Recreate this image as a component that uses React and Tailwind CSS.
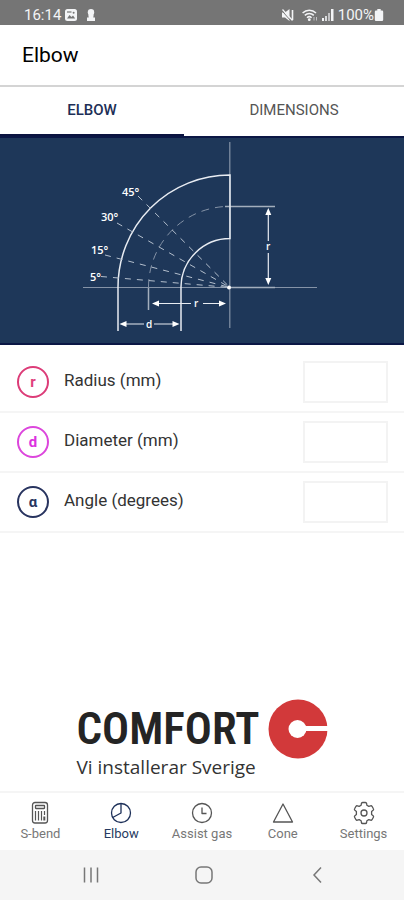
import { useState } from "react";
import clsx from "clsx";

const fields = [
  { id: "radius", symbol: "r", label: "Radius (mm)", color: "border-[#dc3c78] text-[#e0407c]" },
  { id: "diameter", symbol: "d", label: "Diameter (mm)", color: "border-[#dc46dc] text-[#dc32e0]" },
  { id: "angle", symbol: "α", label: "Angle (degrees)", color: "border-[#28345f] text-[#28345f]" },
];

const StatusBar = () => (
  <div className="flex items-end justify-between bg-[#757575] px-5 pt-[5px] text-[15px] leading-5 text-gray-100">
    <div className="flex items-center gap-1 pl-1">
      <span>16:14</span>
      <svg className="h-3 w-3" viewBox="0 0 12 12" aria-hidden="true">
        <rect width="12" height="12" rx="2.5" fill="#f3f4f6" />
        <path d="M2 9.5 4.500 6l2 2L8 6.600l2.200 2.900z" fill="#757575" />
        <path d="M2 3h4.500" stroke="#757575" strokeWidth="1.2" />
        <circle cx="8.600" cy="3.700" r="1" fill="#757575" />
      </svg>
      <svg className="ml-1 h-3 w-3" viewBox="0 0 12 12" fill="#f3f4f6" aria-hidden="true">
        <circle cx="6" cy="3.200" r="3.200" />
        <path d="M3.300 5.500h5.400L8.300 8.500h1.700V12H2V8.500h1.700z" />
      </svg>
    </div>
    <div className="flex items-center gap-1">
      <svg className="h-3 w-3" viewBox="0 0 12 12" fill="#f3f4f6" aria-hidden="true">
        <path d="M0 3.500h3L7.500 0v12L3 8.500H0z" />
        <path d="M10.500 1v10" stroke="#f3f4f6" strokeWidth="1.600" />
        <path d="M0 1.800l9 10.200" stroke="#757575" strokeWidth="1" />
        <path d="M.5 .5l10 11" stroke="#f3f4f6" strokeWidth="1.200" />
      </svg>
      <svg className="ml-1 h-3 w-4" viewBox="0 0 16 12" fill="none" stroke="#f3f4f6" strokeWidth="1.500" aria-hidden="true">
        <path d="M.6 4a9.500 9.500 0 0 1 13.400 0M2.800 6.400a6.500 6.500 0 0 1 9 0M5 8.700a3.400 3.400 0 0 1 4.600 0" />
        <circle cx="7.300" cy="10.600" r=".7" fill="#f3f4f6" />
        <path d="M12 8v3.500M14.500 8v3.500" strokeWidth="1" opacity=".6" />
      </svg>
      <svg className="h-3 w-3" viewBox="0 0 12 12" fill="#f3f4f6" aria-hidden="true">
        <rect y="9" width="2" height="3" />
        <rect x="3" y="7" width="2" height="5" opacity=".8" />
        <rect x="6" y="4" width="2" height="8" opacity=".6" />
        <rect x="9" y="0" width="2.500" height="12" />
      </svg>
      <span>100%</span>
      <svg className="-ml-1 h-3 w-[10px]" viewBox="0 0 10 12" fill="#f3f4f6" aria-hidden="true">
        <path d="M3.300 0h3.400v1.500H8A1.200 1.200 0 0 1 9.200 2.700v8A1.300 1.300 0 0 1 8 12H2A1.300 1.300 0 0 1 .8 10.700v-8A1.200 1.200 0 0 1 2 1.500h1.300z" />
      </svg>
    </div>
  </div>
);

const ElbowDiagram = () => (
  <svg
    className="block w-full"
    viewBox="0 0 404 205"
    fill="none"
    stroke="#e8ecf2"
    role="img"
    aria-label="Elbow pipe with radius and diameter"
  >
    {/* axes */}
    <g stroke="#8593a7">
      <path d="M83 149.500H317" />
      <path d="M229.800 4V190" strokeWidth="1.200" />
    </g>
    <g stroke="#a3aebd" strokeWidth="1.500">
      <path d="M225 68.500H275M230 149.500H275M148.500 150v22" />
    </g>
    {/* bend */}
    <path d="M118 193V149A112 112 0 0 1 230 37V100.500A49 49 0 0 0 181 149V193" strokeWidth="1.500" />
    <path d="M148.500 149A81 81 0 0 1 225 68.500" stroke="#8593a7" strokeDasharray="8 6" />
    {/* angle rays */}
    <g stroke="#b4bfcd" strokeDasharray="6 6">
      <path d="M138 58 230 149.500M117 85 230 149.500M105 117 230 149.500M101 138.500 230 149.500" />
    </g>
    {/* arrows */}
    <path d="M122 186h22M154 186h22M154 165.500h37M203 165.500h20M268.300 72v31M268.300 115v28" strokeWidth="1.200" />
    <g fill="#fff" stroke="none">
      <path d="M119.500 186l7-3v6zM179.500 186l-7-3v6zM152 165.500l7-3v6zM226 165.500l-7-3v6z" />
      <path d="M268.300 70l-3 7h6zM268.300 147l-3-7h6z" />
      <circle cx="229" cy="149.500" r="2" />
    </g>
    <g fill="#fff" stroke="none" className="font-['Open_Sans',sans-serif] text-[11px] font-semibold">
      <text x="122" y="58">45°</text>
      <text x="101" y="83">30°</text>
      <text x="91" y="116">15°</text>
      <text x="90" y="143">5°</text>
      <text x="146" y="190" className="text-[10px]">d</text>
      <text x="194" y="169" className="text-[10px]">r</text>
      <text x="266" y="112" className="text-[10px]">r</text>
    </g>
  </svg>
);

const ComfortLogo = () => (
  <div className="flex items-start justify-center gap-2 pb-4">
    <div className="text-[#242424]">
      <div className="font-['Roboto_Condensed','Liberation_Sans_Narrow',sans-serif] text-[45px] leading-[60px] font-semibold">
        COMFORT
      </div>
      <div className="font-['Open_Sans',sans-serif] text-[19px] leading-4 text-[#333]">Vi installerar Sverige</div>
    </div>
    <svg className="h-[60px] w-[60px]" viewBox="0 0 60 60" aria-hidden="true">
      <circle cx="30" cy="30" r="29.500" fill="#d2393a" />
      <circle cx="29.500" cy="30" r="9" fill="#fff" />
      <path d="M30 27h30v5H30z" fill="#fff" />
    </svg>
  </div>
);

const navItems = [
  {
    name: "S-bend",
    icon: (
      <>
        <rect x="4.500" y="1.500" width="15" height="20.500" rx="2.500" />
        <rect x="7.500" y="4.500" width="9" height="3" rx=".5" />
        <path d="M7.500 10v9.500M10.500 10v9.500M13.500 10v9.500M16.500 10v4" strokeWidth="1.200" />
        <path d="M16.300 15.500v4" strokeWidth="2" />
      </>
    ),
  },
  {
    name: "Elbow",
    icon: (
      <>
        <circle cx="12" cy="12" r="9.500" />
        <path d="M12 2.500V12L3.700 16.500" />
      </>
    ),
  },
  {
    name: "Assist gas",
    icon: (
      <>
        <circle cx="12" cy="12" r="9.500" />
        <path d="M12 6.500V12.500h4.500" />
      </>
    ),
  },
  { name: "Cone", icon: <path d="M12 3 21.500 21h-19z" /> },
  {
    name: "Settings",
    icon: (
      <>
        <path d="M10.600 1.500h2.800q1 0 1.200 1l.3 1.800 1.900 1.100 1.800-.6q.9-.3 1.400.5l1.400 2.500q.5.800-.3 1.500l-1.500 1.200v3l1.500 1.200q.8.700.3 1.500L20 18.700q-.5.800-1.400.5l-1.800-.6-1.900 1.100-.3 1.800q-.2 1-1.200 1h-2.800q-1 0-1.200-1l-.3-1.800-1.900-1.100-1.800.6q-.9.300-1.400-.5l-1.400-2.500q-.5-.8.300-1.500l1.500-1.200v-3L2.900 9.300q-.8-.7-.3-1.500L4 5.300q.5-.8 1.400-.5l1.800.6 1.900-1.100.3-1.800q.2-1 1.200-1z" />
        <circle cx="12" cy="12" r="3" />
      </>
    ),
  },
];

const App = () => {
  const [tab, setTab] = useState("Elbow");
  const [page, setPage] = useState("Elbow");

  return (
    <div className="flex min-h-screen flex-col bg-white font-[Roboto,sans-serif] text-[#333]">
      <StatusBar />

      <header className="border-b-2 border-[#d4d4d4] px-[22px] py-4">
        <h1 className="text-[21px] leading-7 text-black">Elbow</h1>
      </header>

      <div role="tablist" className="grid grid-cols-[184fr_220fr]">
        {["Elbow", "Dimensions"].map((name) => (
          <button
            key={name}
            type="button"
            role="tab"
            aria-selected={tab === name}
            onClick={() => setTab(name)}
            className={clsx(
              "border-b-2 pt-[13px] pb-[14px] text-[15px] leading-5 uppercase",
              tab === name
                ? "border-[#0b1440] font-medium text-[#1d2f57]"
                : "border-transparent text-[#555]"
            )}
          >
            {name}
          </button>
        ))}
      </div>

      <div className="border-y-2 border-[#0b1745] bg-[#1e3759]">
        <ElbowDiagram />
      </div>

      <form className="pt-2">
        {fields.map(({ id, symbol, label, color }) => (
          <div key={id} className="flex items-center border-b-2 border-[#f5f5f5] py-2 pr-4 pl-[17px]">
            <span
              className={clsx(
                "flex h-8 w-8 items-center justify-center rounded-full border-2 text-[15px] leading-5 font-bold",
                color
              )}
            >
              {symbol}
            </span>
            <label htmlFor={id} className="ml-[15px] flex-1 pb-1 text-[17px] leading-6">
              {label}
            </label>
            <input
              id={id}
              type="text"
              inputMode="decimal"
              className="h-[42px] w-[85px] border-2 border-[#f3f3f3] px-2 text-right outline-none"
            />
          </div>
        ))}
      </form>

      <div className="mt-auto">
        <ComfortLogo />

        <nav className="grid grid-cols-5 border-t-2 border-[#f5f5f5] pt-2 pb-2 text-[13px] leading-4">
          {navItems.map(({ name, icon }) => (
            <button
              key={name}
              type="button"
              onClick={() => setPage(name)}
              className={clsx(
                "flex flex-col items-center gap-px",
                page === name ? "text-[#263a61]" : "text-[#777]"
              )}
            >
              <svg
                className="h-6 w-6"
                viewBox="0 0 24 24"
                fill="none"
                stroke={page === name ? "#1d3059" : "#555"}
                strokeWidth="1.300"
                strokeLinejoin="round"
                aria-hidden="true"
              >
                {icon}
              </svg>
              {name}
            </button>
          ))}
        </nav>

        <div className="flex items-center justify-between bg-[#f5f5f5] py-[14px] pr-[76px] pl-20">
          <button type="button" aria-label="Recent apps">
            <svg className="h-[22px] w-[22px]" viewBox="0 0 22 22" stroke="#777" strokeWidth="1.500">
              <path d="M4.500 3.500v15M11 3.500v15M17.500 3.500v15" />
            </svg>
          </button>
          <button type="button" aria-label="Home">
            <svg className="h-[22px] w-[22px]" viewBox="0 0 22 22" fill="none" stroke="#777" strokeWidth="1.500">
              <rect x="3" y="3" width="16" height="16" rx="5" />
            </svg>
          </button>
          <button type="button" aria-label="Back">
            <svg className="h-[22px] w-[22px]" viewBox="0 0 22 22" fill="none" stroke="#777" strokeWidth="1.500">
              <path d="M15 3.500 8 11l7 7.500" />
            </svg>
          </button>
        </div>
      </div>
    </div>
  );
};

export default App;
